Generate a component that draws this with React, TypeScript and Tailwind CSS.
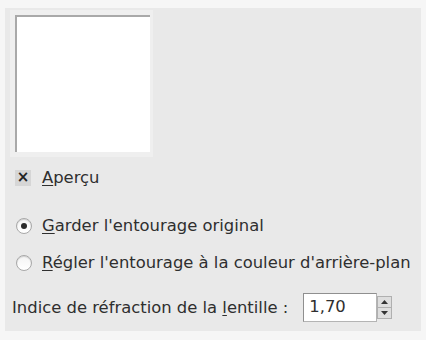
import React from 'react';

const font = { fontFamily: '"DejaVu Sans", "Liberation Sans", sans-serif' };

function Radio({ checked }: { checked: boolean }) {
  return (
    <span className="flex h-[16px] w-[16px] items-center justify-center rounded-full border border-[#a8a8a8] bg-gradient-to-b from-[#f4f4f4] to-[#ffffff] shadow-[inset_0_1px_1px_rgba(0,0,0,0.15)]">
      {checked && <span className="h-[6px] w-[6px] rounded-full bg-[#2a2a2a]" />}
    </span>
  );
}

export default function App() {
  return (
    <div className="h-[340px] w-[426px] bg-[#f6f6f6] pl-[5px] pt-[8px] text-[16.4px] text-[#2f2f2f]" style={font}>
      <div className="flex h-[323px] w-[416px] flex-col bg-[#e9e9e9]">
        {/* Preview area */}
        <div className="ml-[5px] mt-[2px] w-[143px] bg-[#efefef] pb-[5px] pl-[5px] pr-[3px] pt-[5px]">
          <div className="h-[137px] w-[135px] border-l-2 border-t-2 border-[#a9a9a9] bg-white" />
        </div>

        {/* Aperçu checkbox */}
        <div className="ml-[10px] mt-[11px] flex h-[19px] items-center">
          <span className="flex h-[16px] w-[16px] items-center justify-center bg-[#d6d6d6] text-[15px] font-bold leading-none text-[#222]">
            ×
          </span>
          <span className="ml-[11px] leading-[19px]">
            <u className="underline-offset-2">A</u>perçu
          </span>
        </div>

        {/* Radios */}
        <div className="ml-[11px] mt-[29px] flex h-[19px] items-center">
          <Radio checked />
          <span className="ml-[10px] leading-[19px]">
            <u className="underline-offset-2">G</u>arder l'entourage original
          </span>
        </div>
        <div className="ml-[11px] mt-[18px] flex h-[19px] items-center">
          <Radio checked={false} />
          <span className="ml-[10px] leading-[19px]">
            <u className="underline-offset-2">R</u>égler l'entourage à la couleur d'arrière-plan
          </span>
        </div>

        {/* Refraction index */}
        <div className="ml-[7px] mt-[21px] flex h-[29px] items-center">
          <span className="leading-[19px]">
            Indice de réfraction de la <u className="underline-offset-2">l</u>entille :
          </span>
          <div className="ml-[15px] flex h-[29px] items-center">
            <div className="flex h-[29px] w-[74px] items-center border border-[#b4b4b4] border-l-[#8f8f8f] border-t-[#8f8f8f] bg-white pl-[5px]">
              1,70
            </div>
            <div className="flex h-[23px] w-[15px] flex-col">
              <div className="flex flex-1 items-center justify-center border border-[#b0b0b0] bg-[#dedede]">
                <svg width="7" height="4" viewBox="0 0 7 4">
                  <path d="M0 4 L3.5 0 L7 4 Z" fill="#333" />
                </svg>
              </div>
              <div className="flex flex-1 items-center justify-center border border-t-0 border-[#b0b0b0] bg-[#dedede]">
                <svg width="7" height="4" viewBox="0 0 7 4">
                  <path d="M0 0 L7 0 L3.5 4 Z" fill="#333" />
                </svg>
              </div>
            </div>
          </div>
        </div>
      </div>
    </div>
  );
}
